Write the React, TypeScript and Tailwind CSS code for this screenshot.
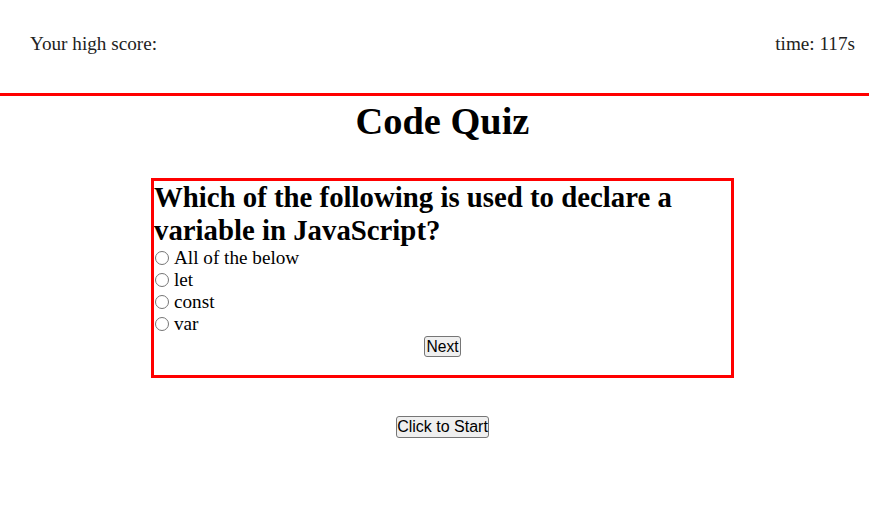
const choices = ["All of the below", "let", "const", "var"];

const App = () => {
  return (
    <div className="min-h-[512px] bg-white text-black font-['Liberation_Serif',serif]">
      {/* HEADER */}
      <header className="flex h-[96px] justify-between border-b-[3px] border-[#ff0000] pl-[30px] pr-[14px] pt-[33px] text-[19.2px] leading-[22px] text-[#222]">
        <p>Your high score:</p>
        <p>time: 117s</p>
      </header>

      <main className="flex flex-col items-center pl-[16px]">
        <h1 className="mt-[3px] text-[38.4px] font-bold leading-[44px]">Code Quiz</h1>

        {/* QUESTION */}
        <section className="mt-[35px] w-[583px] border-[3px] border-[#ff0000] pb-[18px]">
          <h2 className="text-[28.8px] font-bold leading-[33px]">
            Which of the following is used to declare a variable in JavaScript?
          </h2>
          <div className="flex flex-col text-[19.2px] leading-[22px]">
            {choices.map((c) => (
              <label key={c} className="flex items-start">
                <input
                  type="radio"
                  name="answer"
                  className="ml-[1px] mr-[5px] mt-[4px] h-[14px] w-[14px]"
                />
                <span>{c}</span>
              </label>
            ))}
          </div>
          <div className="mt-[1px] flex justify-center">
            <button className="h-[21px] rounded-[3px] border border-[#767676] bg-[#efefef] px-[1px] font-['Liberation_Sans',Arial,sans-serif] text-[15.6px] leading-[18px] text-black">
              Next
            </button>
          </div>
        </section>

        <button className="mt-[38px] h-[22px] rounded-[3px] border border-[#767676] bg-[#efefef] px-[0.5px] font-['Liberation_Sans',Arial,sans-serif] text-[16px] leading-[18px] text-black">
          Click to Start
        </button>
      </main>
    </div>
  );
};

export default App;
